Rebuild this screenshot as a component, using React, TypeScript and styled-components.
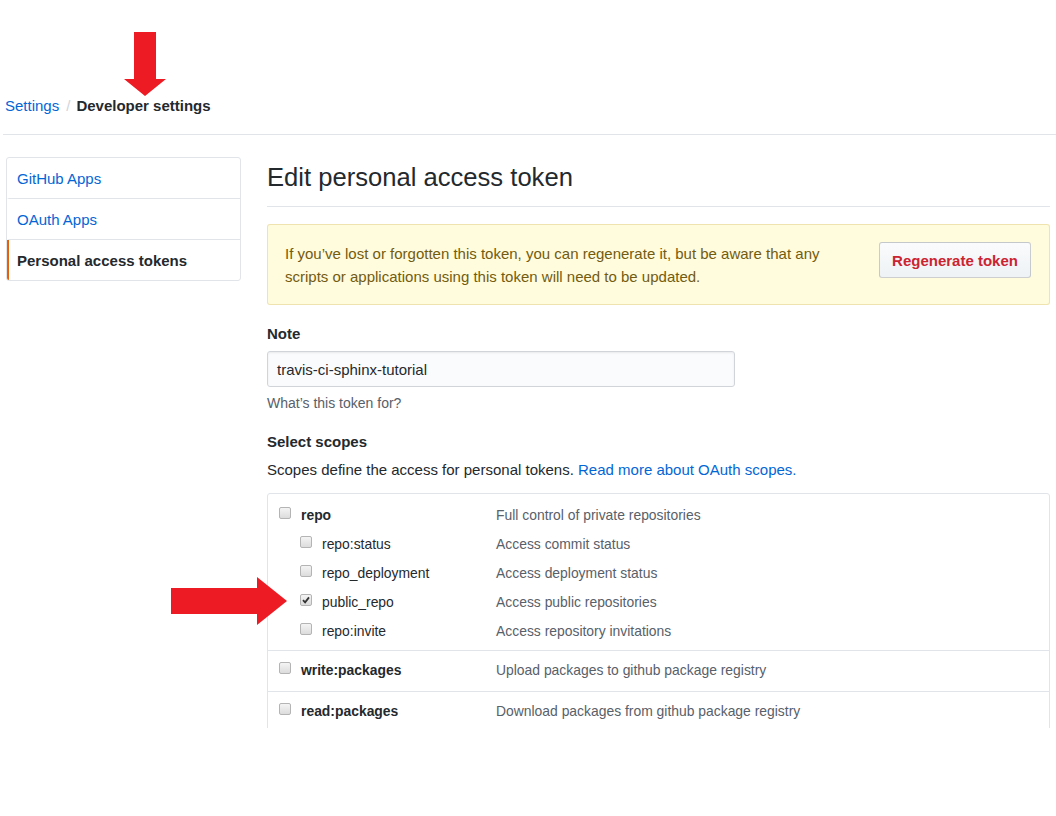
import React from "react";
import styled, { createGlobalStyle } from "styled-components";

const Global = createGlobalStyle`
  html, body { margin: 0; padding: 0; background: #fff; }
  body {
    font-family: "Liberation Sans", Helvetica, Arial, sans-serif;
    font-size: 15px;
    line-height: 21px;
    color: #24292e;
  }
  * { box-sizing: border-box; }
`;

const Viewport = styled.div`
  position: relative;
  width: 1056px;
  height: 728px;
  overflow: hidden;
`;

const Header = styled.div`
  margin-left: 3px;
  padding: 95px 0 18px 2px;
  border-bottom: 1px solid #e1e4e8;
  display: flex;
  align-items: center;
`;

const Crumb = styled.a<{ $current?: boolean }>`
  color: ${(p) => (p.$current ? "#24292e" : "#0366d6")};
  font-weight: ${(p) => (p.$current ? 700 : 400)};
  text-decoration: none;
`;

const Sep = styled.span`
  color: #d1d5da;
  padding: 0 6px 0 7px;
`;

const Body = styled.div`
  display: flex;
  gap: 26px;
  padding: 22px 6px 0 6px;
`;

const Sidebar = styled.nav`
  width: 235px;
  flex: none;
  border: 1px solid #e1e4e8;
  border-radius: 3px;
  align-self: flex-start;
  overflow: hidden;
`;

const MenuItem = styled.a<{ $selected?: boolean }>`
  display: flex;
  align-items: center;
  height: 41px;
  padding-left: 8px;
  border-bottom: 1px solid #e1e4e8;
  border-left: 2px solid ${(p) => (p.$selected ? "#e36209" : "transparent")};
  color: ${(p) => (p.$selected ? "#24292e" : "#0366d6")};
  font-weight: ${(p) => (p.$selected ? 700 : 400)};
  text-decoration: none;
  &:last-child { border-bottom: none; height: 40px; }
`;

const Main = styled.main`
  width: 783px;
  flex: none;
`;

const Title = styled.h2`
  margin: 4px 0 0 0;
  padding-bottom: 13px;
  font-size: 25.6px;
  line-height: 32px;
  font-weight: 400;
  border-bottom: 1px solid #e1e4e8;
`;

const Flash = styled.div`
  margin-top: 17px;
  display: flex;
  align-items: flex-start;
  gap: 40px;
  padding: 17px 18px 16px 17px;
  background: #fffbdd;
  border: 1px solid rgba(176, 136, 0, 0.2);
  border-radius: 3px;
  color: #735c0f;
  line-height: 23px;
`;

const FlashText = styled.p`
  margin: 0;
  flex: 1;
`;

const Button = styled.button`
  flex: none;
  margin-top: 0;
  height: 36px;
  width: 152px;
  font-family: inherit;
  font-size: 15px;
  font-weight: 700;
  color: #cb2431;
  background: linear-gradient(-180deg, #fafbfc 0%, #eff3f6 90%);
  border: 1px solid rgba(27, 31, 35, 0.2);
  border-radius: 3px;
  padding: 0;
`;

const Label = styled.div<{ $mt: number }>`
  margin-top: ${(p) => p.$mt}px;
  font-weight: 700;
`;

const Input = styled.div`
  margin-top: 7px;
  width: 468px;
  height: 36px;
  display: flex;
  align-items: center;
  padding-left: 9px;
  background: #fafbfc;
  border: 1px solid #d1d5da;
  border-radius: 3px;
  box-shadow: inset 0 1px 2px rgba(27, 31, 35, 0.075);
`;

const Hint = styled.p`
  margin: 6px 0 0 0;
  font-size: 14px;
  line-height: 20px;
  color: #586069;
`;

const Text = styled.p`
  margin: 7px 0 0 0;
`;

const Link = styled.a`
  color: #0366d6;
  text-decoration: none;
`;

const ScopeBox = styled.div`
  margin-top: 13px;
  border: 1px solid #e1e4e8;
  border-radius: 3px;
`;

const Group = styled.div<{ $pt: number; $pb: number }>`
  padding: ${(p) => p.$pt}px 0 ${(p) => p.$pb}px 0;
  border-bottom: 1px solid #e1e4e8;
  &:last-child { border-bottom: none; }
`;

const Row = styled.div`
  display: grid;
  grid-template-columns: 217px 1fr;
  height: 29px;
  align-items: center;
  padding-left: 11px;
  font-size: 13.9px;
`;

const Name = styled.label<{ $indent: number; $bold?: boolean }>`
  display: flex;
  align-items: center;
  gap: 10px;
  padding-left: ${(p) => p.$indent}px;
  font-weight: ${(p) => (p.$bold ? 700 : 400)};
  color: #24292e;
`;

const Desc = styled.span`
  color: #586069;
`;

const Box = styled.span`
  width: 12px;
  height: 12px;
  flex: none;
  position: relative;
  top: -3px;
  display: inline-flex;
  align-items: center;
  justify-content: center;
  border: 1px solid #b4b4b4;
  border-radius: 2px;
  background: linear-gradient(#f4f4f4, #dcdcdc);
`;

const Arrow = styled.svg<{ $x: number; $y: number }>`
  position: absolute;
  left: ${(p) => p.$x}px;
  top: ${(p) => p.$y}px;
`;

const Check = ({ checked }: { checked?: boolean }) => (
  <Box>
    {checked && (
      <svg width="10" height="10" viewBox="0 0 10 10">
        <path d="M2 5.2 L4.1 7.4 L8 2.4" fill="none" stroke="#333" strokeWidth="1.8" />
      </svg>
    )}
  </Box>
);

type Scope = { name: string; desc: string; sub?: boolean; checked?: boolean };
type ScopeGroup = { pt: number; pb: number; scopes: Scope[] };

const groups: ScopeGroup[] = [
  {
    pt: 7,
    pb: 4,
    scopes: [
      { name: "repo", desc: "Full control of private repositories" },
      { name: "repo:status", desc: "Access commit status", sub: true },
      { name: "repo_deployment", desc: "Access deployment status", sub: true },
      { name: "public_repo", desc: "Access public repositories", sub: true, checked: true },
      { name: "repo:invite", desc: "Access repository invitations", sub: true },
    ],
  },
  { pt: 5, pb: 6, scopes: [{ name: "write:packages", desc: "Upload packages to github package registry" }] },
  { pt: 5, pb: 6, scopes: [{ name: "read:packages", desc: "Download packages from github package registry" }] },
];

export default function App() {
  return (
    <Viewport>
      <Global />
      <Header>
        <Crumb href="#">Settings</Crumb>
        <Sep>/</Sep>
        <Crumb $current>Developer settings</Crumb>
      </Header>
      <Body>
        <Sidebar>
          <MenuItem href="#">GitHub Apps</MenuItem>
          <MenuItem href="#">OAuth Apps</MenuItem>
          <MenuItem $selected>Personal access tokens</MenuItem>
        </Sidebar>
        <Main>
          <Title>Edit personal access token</Title>
          <Flash>
            <FlashText>
              If you’ve lost or forgotten this token, you can regenerate it, but be aware that any
              scripts or applications using this token will need to be updated.
            </FlashText>
            <Button>Regenerate token</Button>
          </Flash>
          <Label $mt={18}>Note</Label>
          <Input>travis-ci-sphinx-tutorial</Input>
          <Hint>What’s this token for?</Hint>
          <Label $mt={18}>Select scopes</Label>
          <Text>
            Scopes define the access for personal tokens.{" "}
            <Link href="#">Read more about OAuth scopes.</Link>
          </Text>
          <ScopeBox>
            {groups.map((g, gi) => (
              <Group key={gi} $pt={g.pt} $pb={g.pb}>
                {g.scopes.map((s) => (
                  <Row key={s.name}>
                    <Name $indent={s.sub ? 21 : 0} $bold={!s.sub}>
                      <Check checked={s.checked} />
                      {s.name}
                    </Name>
                    <Desc>{s.desc}</Desc>
                  </Row>
                ))}
              </Group>
            ))}
          </ScopeBox>
        </Main>
      </Body>
      <Arrow $x={124} $y={32} width="42" height="64" viewBox="0 0 42 64">
        <path d="M10 0 H32 V47 H42 L21 64 L0 47 H10 Z" fill="#ed1c24" />
      </Arrow>
      <Arrow $x={171} $y={577} width="116" height="48" viewBox="0 0 116 48">
        <path d="M0 11 H86 V0 L116 24 L86 48 V37 H0 Z" fill="#ed1c24" />
      </Arrow>
    </Viewport>
  );
}
